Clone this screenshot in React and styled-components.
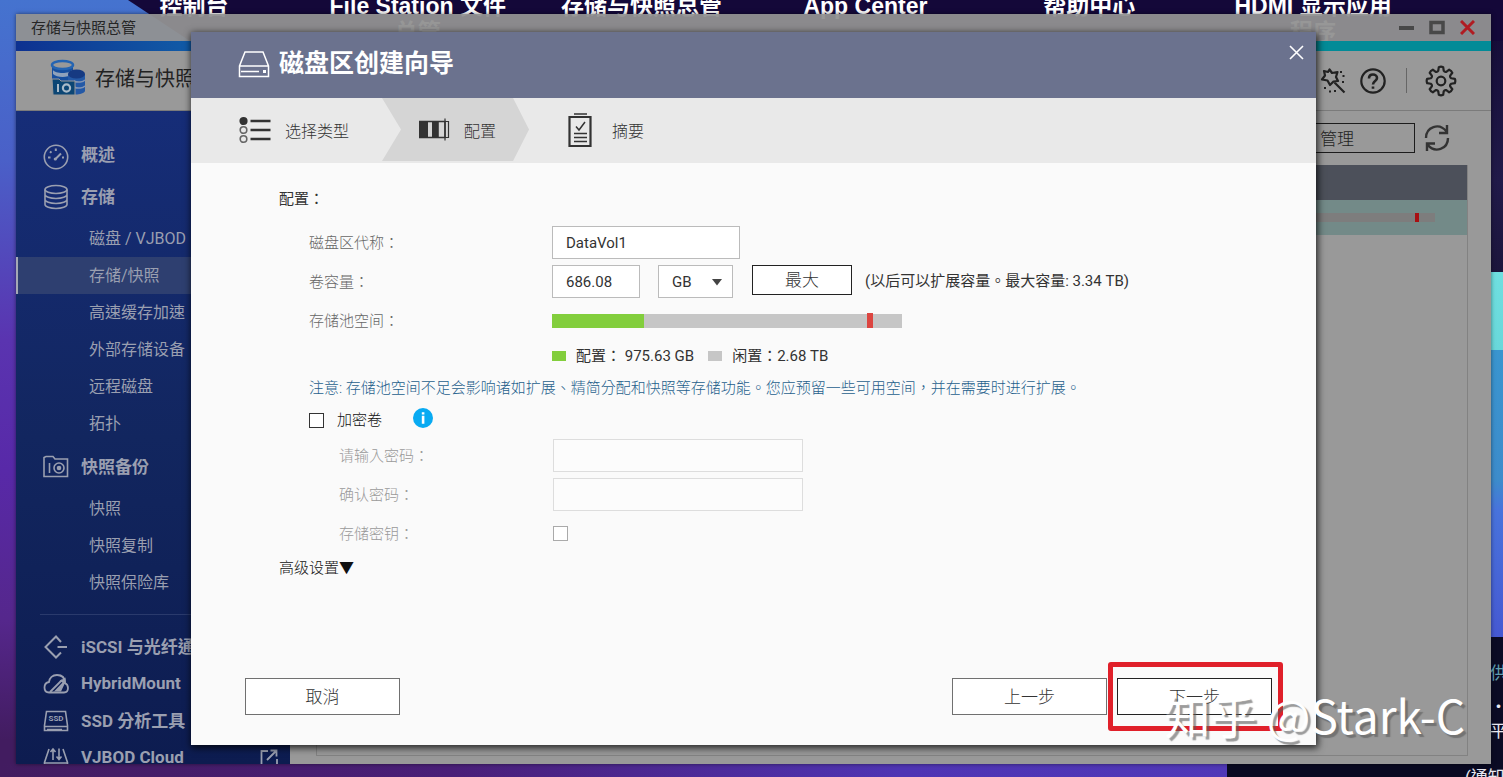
import React from "react";
import styled, { createGlobalStyle, css } from "styled-components";

const sans = `Roboto, "Noto Sans CJK TC", "Noto Sans CJK SC", sans-serif`;

const Global = createGlobalStyle`
  *, *::before, *::after { box-sizing: border-box; }
  body { margin: 0; font-family: ${sans}; font-size: 15px; color: #333; }
  button, input, select { font: inherit; color: inherit; margin: 0; border-radius: 0; }
  a { color: inherit; text-decoration: none; }
  ul { list-style: none; margin: 0; padding: 0; }
  h1, h2, p { margin: 0; }
`;

/* ---------- desktop ---------- */

const Desktop = styled.div`
  position: relative;
  height: 100vh;
  min-height: 700px;
  overflow: hidden;
  background:
    linear-gradient(180deg, #130a35 0, #211a49 180px, #1c153c 272px, #6fdfe0 272px, #69d8da 350px, #3a95cf 350px, #3d8ccb 480px, #4873dc 510px, #4659d2 637px, #0b0b24 637px) right top / 14px 100% no-repeat,
    linear-gradient(#0a0a22, #0a0a22) right bottom / 276px 14px no-repeat,
    linear-gradient(90deg, #421c60 0, #4a1f78 30%, #4f35b4 60%, #5038b8 82%) left bottom / 100% 13px no-repeat,
    linear-gradient(180deg, #4573cf 0, #4a60c8 160px, #5a34b0 340px, #5829a8 470px, #55278c 620px, #421c60 740px);
`;

const NightSky = styled.div`
  position: absolute;
  inset: 0 0 auto 0;
  height: 41px;
  background: #140839;
  clip-path: polygon(128px 0, 100% 0, 100% 41px, 190px 41px);
`;

const Shortcuts = styled.nav`
  position: relative;
  display: grid;
  grid-template-columns: repeat(6, 1fr);
  padding: 0 78px 0 82px;
  margin-top: -7px;
  font: 700 23px/26px "Liberation Sans", "Noto Sans CJK TC", sans-serif;
  color: #fff;
  text-align: center;
`;

const Ticker = styled.aside`
  position: absolute;
  right: 0;
  bottom: -12px;
  width: 38px;
  font-size: 17px;
  line-height: 24px;
  color: #fff;
  white-space: nowrap;
`;

const TickerLine = styled.p`
  padding-left: ${(p) => (p.$wide ? 0 : 25)}px;
  margin-top: ${(p) => p.$gap || 0}px;
  color: ${(p) => (p.$tone === "link" ? "#5f9fb0" : "#e8e8f0")};
`;

/* ---------- storage manager window ---------- */

const Window = styled.main`
  position: absolute;
  inset: 14px 12px 13px 16px;
  display: flex;
  flex-direction: column;
  box-shadow: 0 0 4px rgba(0, 0, 0, 0.5);
`;

const TitleBar = styled.header`
  display: flex;
  align-items: center;
  justify-content: space-between;
  height: 27px;
  padding: 0 16px 0 15px;
  background: rgba(145, 145, 145, 0.95);
  color: #262626;
`;

const TitleText = styled.span`
  padding-bottom: 2px;
`;

const WindowButtons = styled.div`
  display: flex;
  align-items: center;
  gap: 14px;
`;

const IconButton = styled.button`
  display: flex;
  align-items: center;
  justify-content: center;
  padding: 0;
  border: 0;
  background: none;
`;

const Stripe = styled.div`
  height: 10px;
  background: linear-gradient(90deg, #0d3190 0, #1263ab 14%, #0a7ba0 50%, #028b97 85%);
`;

const AppHeader = styled.div`
  display: flex;
  align-items: center;
  justify-content: space-between;
  height: 60px;
  padding: 0 34px 0 34px;
  background: #999;
  border-bottom: 1px solid #7b7b7b;
  color: #222;
`;

const Brand = styled.div`
  display: flex;
  align-items: center;
  gap: 9px;
  padding-bottom: 6px;
  font-size: 20px;
`;

const HeaderTools = styled.div`
  display: flex;
  align-items: center;
  gap: 14px;
`;

const ToolDivider = styled.span`
  width: 1px;
  height: 25px;
  margin: 0 4px 0 6px;
  background: #666;
`;

const Body = styled.div`
  display: flex;
  flex: 1;
  min-height: 0;
`;

const Sidebar = styled.nav`
  flex: none;
  width: 274px;
  padding-top: 23px;
  overflow: hidden;
  background: linear-gradient(180deg, #162d78 0, #12265f 50%, #0d1c50 100%);
  color: #9a9fb0;
`;

const SectionLink = styled.a`
  display: flex;
  align-items: center;
  gap: 12px;
  height: ${(p) => (p.$compact ? 37 : 42)}px;
  padding: 0 12px 0 27px;
  font-size: 17px;
  font-weight: 700;
  white-space: nowrap;
  & > span { padding-bottom: ${(p) => (p.$compact ? 2 : 4)}px; }
  & > svg:last-child { margin-left: auto; }
`;

const SubList = styled.ul`
  padding: 2px 0 4px;
`;

const SubLink = styled.a`
  display: flex;
  align-items: center;
  height: 37px;
  padding: 0 0 4px 71px;
  border-left: 2px solid transparent;
  font-size: 16px;
  ${(p) => p.$active && css`
    background: #2e3f70;
    border-left-color: #a5a9b5;
  `}
`;

const Rule = styled.hr`
  height: 1px;
  margin: 9px 0 13px 24px;
  border: 0;
  background: #2a3a6c;
`;

const Content = styled.section`
  flex: 1;
  display: flex;
  flex-direction: column;
  padding: 12px 23px 8px 26px;
  background: #999;
`;

const ContentTools = styled.div`
  display: flex;
  align-items: center;
  justify-content: flex-end;
  gap: 9px;
  height: 30px;
  margin: 0 18px 12px 0;
`;

const ManageButton = styled.button`
  width: 130px;
  height: 30px;
  padding: 0 0 2px 34px;
  border: 1px solid #1c1c1c;
  background: none;
  font-size: 17px;
  font-weight: 300;
  text-align: left;
  color: #222;
`;

const PoolTable = styled.div`
  flex: 1;
  border: 1px solid #828282;
  border-top: 0;
`;

const PoolHead = styled.div`
  height: 35px;
  background: #4c505a;
`;

const PoolRow = styled.div`
  display: flex;
  align-items: center;
  justify-content: flex-end;
  height: 35px;
  padding-right: 32px;
  background: #738a88;
`;

const PoolMeter = styled.div`
  display: flex;
  justify-content: flex-end;
  width: 200px;
  height: 9px;
  padding-right: 16px;
  background: #7d7d7d;
`;

const PoolMark = styled.span`
  width: 4px;
  background: #a80f12;
`;

/* ---------- wizard dialog ---------- */

const Dialog = styled.section`
  position: absolute;
  inset: 18px 175px 19px;
  display: flex;
  flex-direction: column;
  background: #fafafa;
  box-shadow: 1px 2px 7px 1px rgba(0, 0, 0, 0.75);
`;

const DialogHead = styled.header`
  display: flex;
  align-items: flex-start;
  justify-content: space-between;
  height: 66px;
  padding: 13px 12px 0 47px;
  background: #6b728e;
  color: #fff;
`;

const DialogTitle = styled.h1`
  display: flex;
  align-items: center;
  gap: 9px;
  font-size: 25px;
  line-height: 37px;
  font-weight: 700;
`;

const Steps = styled.ol`
  display: flex;
  height: 65px;
  margin: 0;
  padding: 0 0 2px;
  list-style: none;
  background: #e9e9e9;
`;

const Step = styled.li`
  display: flex;
  align-items: center;
  gap: 14px;
  padding-left: ${(p) => p.$indent}px;
  padding-right: 33px;
  font-size: 16px;
  font-weight: 300;
  ${(p) => p.$current && css`
    background: #d5d5d5;
    clip-path: polygon(0 0, calc(100% - 16px) 0, 100% 50%, calc(100% - 16px) 100%, 0 100%, 19px 50%);
  `}
`;

const Form = styled.form`
  display: flex;
  flex: 1;
  flex-direction: column;
`;

const Fields = styled.div`
  flex: 1;
  padding: 20px 88px 0;
`;

const FieldsTitle = styled.h2`
  margin-bottom: 8px;
  font-size: 15px;
  line-height: 32px;
  font-weight: 400;
`;

const Row = styled.div`
  display: flex;
  align-items: center;
  height: ${(p) => p.$height || 39}px;
  padding-left: ${(p) => (p.$nested ? 60 : 30)}px;
`;

const Label = styled.label`
  flex: none;
  width: ${(p) => (p.$nested ? 214 : 243)}px;
  padding-bottom: 3px;
  color: ${(p) => (p.$nested ? "#999" : "#666")};
  font-weight: 300;
`;

const Hint = styled.span`
  padding-bottom: 4px;
`;

const TextBox = styled.input`
  width: ${(p) => p.$width}px;
  height: 33px;
  padding: 0 13px;
  border: 1px solid ${(p) => (p.disabled ? "#ddd" : "#bbb")};
  background: ${(p) => (p.disabled ? "#fcfcfc" : "#fff")};
`;

const UnitPicker = styled.div`
  position: relative;
  margin: 0 19px 0 18px;
  & > svg { position: absolute; right: 10px; top: 13px; pointer-events: none; }
`;

const UnitSelect = styled.select`
  appearance: none;
  width: 75px;
  height: 33px;
  padding: 0 13px;
  border: 1px solid #bbb;
  background: #fff;
`;

const MaxButton = styled.button`
  width: 100px;
  height: 30px;
  margin: 0 13px 4px 0;
  padding: 0 0 2px;
  border: 1px solid #222;
  background: #fff;
  font-size: 17px;
  font-weight: 300;
`;

const Meter = styled.div`
  position: relative;
  width: 350px;
  height: 14px;
  background: #c6c6c6;
`;

const MeterFill = styled.div`
  height: 100%;
  background: #82ce3c;
`;

const MeterMark = styled.span`
  position: absolute;
  top: -1px;
  bottom: 0;
  width: 6px;
  background: #dc4540;
`;

const Legend = styled.div`
  display: flex;
  align-items: center;
  height: 32px;
  padding-left: 273px;
`;

const LegendText = styled.span`
  padding-bottom: 3px;
`;

const Swatch = styled.span`
  width: 14px;
  height: 10px;
  margin: 0 10px 0 ${(p) => (p.$later ? 14 : 0)}px;
  background: ${(p) => p.$color};
`;

const Note = styled.p`
  padding-left: 30px;
  line-height: 32px;
  color: #1f5f8c;
  font-weight: 300;
`;

const Tick = styled.input`
  appearance: none;
  width: 15px;
  height: 15px;
  border: 1px solid ${(p) => (p.disabled ? "#aaa" : "#333")};
  background: #fff;
`;

const TickLabel = styled.label`
  display: flex;
  align-items: center;
  gap: 13px;
  margin-right: 31px;
  font-weight: 300;
  color: #111;
  & > span { padding-bottom: 3px; }
`;

const InfoButton = styled(IconButton)`
  margin-bottom: 4px;
`;

const Advanced = styled.button`
  display: block;
  padding: 0;
  border: 0;
  background: none;
  line-height: 30px;
  font-weight: 300;
  color: #111;
`;

const Footer = styled.footer`
  display: flex;
  gap: 10px;
  padding: 0 44px 30px 54px;
`;

const FooterButton = styled.button`
  width: 155px;
  height: 37px;
  margin-right: ${(p) => (p.$first ? "auto" : 0)};
  padding: 0 0 3px;
  border: 1px solid ${(p) => (p.$main ? "#222" : "#707070")};
  background: #fff;
  font-size: 17px;
  font-weight: 300;
`;

const Highlight = styled.div`
  position: relative;
  &::after {
    content: "";
    position: absolute;
    inset: -16px -11px -16px -9px;
    border: 5px solid #e0202a;
    border-radius: 3px;
    pointer-events: none;
  }
`;

const Signature = styled.p`
  position: absolute;
  right: 38px;
  bottom: 33px;
  font: 400 46px/60px "Noto Sans CJK SC", sans-serif;
  color: #fff;
  text-shadow: 3px 3px 1px rgba(90, 90, 90, 0.6);
  white-space: nowrap;
`;

/* ---------- drawings ---------- */

const Drawing = styled.svg`
  flex: none;
`;

const Line = ({ w = 26, h = 26, box, sw = 1.6, children }) => (
  <Drawing width={w} height={h} viewBox={box || `0 0 ${w} ${h}`} fill="none" stroke="currentColor" strokeWidth={sw} aria-hidden="true">
    {children}
  </Drawing>
);

const Gauge = () => (
  <Line w={26} h={32} box="0 -5 26 32">
    <circle cx="13" cy="13" r="11.7" />
    <path d="M12 15.500L18 9.500M5 13.500h2.500M7 7.500l1.500 1.300M12.800 4.500v2.500M19 13.500h2" strokeWidth="2" />
    <circle cx="12.300" cy="15" r="1.600" fill="currentColor" stroke="none" />
  </Line>
);
const Disks = () => (
  <Line>
    <ellipse cx="13" cy="5.500" rx="11" ry="4" />
    <path d="M2 5.500v15c0 2.200 5 4 11 4s11-1.800 11-4v-15M2 10.500c0 2.200 5 4 11 4s11-1.800 11-4M2 15.500c0 2.200 5 4 11 4s11-1.800 11-4" />
  </Line>
);
const Snapshot = () => (
  <Line>
    <path d="M1 22.500v-19l2-1h7l2 2.500h12.500v17.500zM6.500 9v10" />
    <circle cx="16" cy="14" r="5" /><circle cx="16" cy="14" r="1.500" fill="currentColor" />
  </Line>
);
const Iscsi = () => (
  <Line sw={2}>
    <path d="M18 8l-5-5.500L2.500 13 13 23.500l5-5M14.500 13H24" />
  </Line>
);
const Cloud = () => (
  <Line sw={1.8}>
    <path d="M6 21.500h15c3 0 4-2.500 4-4.500 0-2.500-1-4-3-5C22 6 18 4 14 4 9.500 4 6.500 7 6 11c-3 .5-4.500 2.500-4.500 5.500S3 21.500 6 21.500z" />
    <path d="M11 20.500l8.500-9-3-1.500 6-3.500.5 7-1.500-.5-3.500 7.500z" fill="currentColor" stroke="none" /><path d="M7 21L19 9" />
  </Line>
);
const Ssd = () => (
  <Line>
    <path d="M3.500 3.500h19l2 14v5h-23v-5zM1.500 18.500h23M4 21.500h15" />
    <text x="13" y="13" textAnchor="middle" fontSize="8" fontWeight="700" fill="currentColor" stroke="none">SSD</text>
  </Line>
);
const Vjbod = () => (
  <Line>
    <path d="M6 4L1.500 17.500V23M20 4l4.500 13.500V23M1.500 18h23M10 15V4.500M7.500 7L10 4l2.500 3M16 3.500V14M13.500 11.500l2.500 3 2.500-3M5 21v2M9 21v2" />
  </Line>
);
const External = () => (
  <Line w={18} h={18} sw={1.8}>
    <path d="M8 2H1.500v14.500H17V10M7 11L16 2M10.500 1.500H16.500V7.500" />
  </Line>
);
const BrandIcon = () => (
  <svg width="36" height="38" viewBox="0 0 36 38" aria-hidden="true">
    <path d="M2 6v14c0 3 21 3 21 0V6z" fill="#174f9e" />
    <ellipse cx="12.500" cy="6" rx="10.500" ry="4" fill="#999" stroke="#2464b2" strokeWidth="2.500" />
    <path d="M3 11c2 4 17 4 19 0v4c-4 4-15 4-19 0z" fill="#8fa2bb" />
    <path d="M18 15v18c2 4 16 3 17-1V15z" fill="#2459a6" />
    <ellipse cx="26.500" cy="15" rx="8.500" ry="4.500" fill="#163a82" />
    <path d="M24 22c4 2 9 1 11-1M24 28c4 2 9 1 11-1" stroke="#8295b5" strokeWidth="1.500" fill="none" />
    <path d="M2 20h7l2 2h14v14H3z" fill="#0c4674" stroke="#999" strokeWidth="1" />
    <path d="M8 25v8" stroke="#a9bac8" strokeWidth="2" /><circle cx="16.500" cy="29" r="3.600" fill="none" stroke="#a9bac8" strokeWidth="2.200" />
  </svg>
);
const Wand = () => (
  <Line sw={2.2}>
    <path d="M9.500 1.500l2.500 3.500 5.500-1-1.500 5 2 4-4.500.5L10 17l-2.500-4.500-5.500-1 3-4L4 3l4 1zM14.500 14.500l10 10" strokeLinejoin="round" />
    <path d="M20 4h2M22.500 8h2M22 14h2M4 20h2M9 23.500h2M14 23h2" />
  </Line>
);
const Help = () => (
  <Line sw={2.2}>
    <circle cx="13" cy="13" r="11.700" />
    <path d="M9 10.500c0-5.500 8-5 8-.5 0 3-4 3-4 6.500M13 18.500v2.200" strokeWidth="2.600" />
  </Line>
);
const gearPath = Array.from({ length: 8 }, (_, i) => {
  const at = (r, d) => {
    const a = ((i * 45 + d - 90) * Math.PI) / 180;
    return `${(16 + r * Math.cos(a)).toFixed(2)} ${(16 + r * Math.sin(a)).toFixed(2)}`;
  };
  return `${i ? "L" : "M"}${at(10.6, -15)}L${at(14, -9)}Q${at(14.8, 0)} ${at(14, 9)}L${at(10.6, 15)}Q${at(9.4, 22.5)} ${at(10.6, 30)}`;
}).join("") + "Z";
const Gear = () => (
  <Line w={32} h={32} sw={2.2}>
    <path d={gearPath} strokeLinejoin="round" /><circle cx="16" cy="16" r="4.300" />
  </Line>
);
const Refresh = () => (
  <Line w={26} h={30} sw={2.4}>
    <path d="M2 15C2 4 15-1 22.500 8.500M23 2v8h-8M24 15c0 11-13 16-20.500 6.500M3 28v-7.500h8" />
  </Line>
);
const Drive = () => (
  <Line w={32} h={28} sw={1.5}>
    <path d="M7 2h18l5.500 14v10.500h-29V16zM1.500 16h29M3 21.500h18" /><path d="M25 20h3v3h-3z" fill="currentColor" stroke="none" />
  </Line>
);
const Choices = () => (
  <Line w={32} h={28}>
    <path d="M11.500 5h20M11.500 14h20M11.500 23h20" strokeWidth="2.600" />
    <circle cx="4.500" cy="5" r="3.300" fill="currentColor" /><circle cx="4.500" cy="14" r="3.300" stroke="#666" /><circle cx="4.500" cy="23" r="3.300" stroke="#666" />
  </Line>
);
const Partition = () => (
  <Line w={32} h={28}>
    <path d="M1 5h9v17H1zM14 5h6v17h-6z" fill="currentColor" stroke="none" />
    <path d="M1 5.500h26v16H1M20 5v17" />
    <path d="M27 2.500v22M27 5.500h3.500v16H27" strokeWidth="1.200" />
  </Line>
);
const Clipboard = () => (
  <Line w={32} h={36} sw={2.2}>
    <path d="M3.500 5h21v29h-21z" /><path d="M8 2h13M8 21.500h13M8 25.500h13M8 29.500h13M10 14.500l3 3.500 6-8" strokeWidth="1.500" />
  </Line>
);
const Cross = ({ color, sw = 1.6 }) => (
  <svg width="15" height="15" viewBox="0 0 15 15" stroke={color} strokeWidth={sw} aria-hidden="true"><path d="M1 1l13 13M14 1L1 14" /></svg>
);
const Info = () => (
  <svg width="20" height="20" viewBox="0 0 20 20" aria-hidden="true"><circle cx="10" cy="10" r="10" fill="#08aaf2" /><path d="M8.800 4.200h2.600v2.200H8.800zM8.800 7.800h2.600v8H8.800z" fill="#fff" /></svg>
);

/* ---------- data ---------- */

const shortcuts = [["控制台"], ["File Station 文件", "总管"], ["存储与快照总管"], ["App Center"], ["帮助中心"], ["HDMI 显示应用", "程序"]];
const storageLinks = ["磁盘 / VJBOD", "存储/快照", "高速缓存加速", "外部存储设备", "远程磁盘", "拓扑"];
const snapshotLinks = ["快照", "快照复制", "快照保险库"];
const tools = [
  { icon: <Iscsi />, name: "iSCSI 与光纤通道" },
  { icon: <Cloud />, name: "HybridMount" },
  { icon: <Ssd />, name: "SSD 分析工具" },
  { icon: <Vjbod />, name: "VJBOD Cloud", external: true },
];

const SubLinks = ({ names, active }) => (
  <SubList>
    {names.map((name) => (
      <li key={name}><SubLink href="#" $active={name === active}>{name}</SubLink></li>
    ))}
  </SubList>
);

export default function App() {
  return (
    <>
      <Global />
      <Desktop>
        <NightSky />
        <Shortcuts>
          {shortcuts.map((lines) => (
            <a href="#" key={lines[0]}>
              {lines.map((line) => <div key={line}>{line}</div>)}
            </a>
          ))}
        </Shortcuts>
        <Ticker>
          <TickerLine $tone="link">供</TickerLine>
          <TickerLine $gap={10}>・</TickerLine>
          <TickerLine>平</TickerLine>
          <TickerLine $wide $gap={22}>(通知</TickerLine>
        </Ticker>

        <Window>
          <TitleBar>
            <TitleText>存储与快照总管</TitleText>
            <WindowButtons>
              <IconButton aria-label="最小化"><svg width="16" height="16"><path d="M0 6h15v4H0z" fill="#484848" /></svg></IconButton>
              <IconButton aria-label="最大化"><svg width="17" height="16"><path d="M2 2.500h12v10H2z" fill="none" stroke="#484848" strokeWidth="3.500" /></svg></IconButton>
              <IconButton aria-label="关闭"><Cross color="#b01c22" sw={3} /></IconButton>
            </WindowButtons>
          </TitleBar>
          <Stripe />
          <AppHeader>
            <Brand><BrandIcon />存储与快照总管</Brand>
            <HeaderTools>
              <IconButton aria-label="向导"><Wand /></IconButton>
              <IconButton aria-label="帮助"><Help /></IconButton>
              <ToolDivider />
              <IconButton aria-label="设置"><Gear /></IconButton>
            </HeaderTools>
          </AppHeader>
          <Body>
            <Sidebar>
              <SectionLink href="#"><Gauge /><span>概述</span></SectionLink>
              <SectionLink href="#"><Disks /><span>存储</span></SectionLink>
              <SubLinks names={storageLinks} active="存储/快照" />
              <SectionLink href="#"><Snapshot /><span>快照备份</span></SectionLink>
              <SubLinks names={snapshotLinks} />
              <Rule />
              {tools.map((tool) => (
                <SectionLink href="#" key={tool.name} $compact>
                  {tool.icon}<span>{tool.name}</span>{tool.external && <External />}
                </SectionLink>
              ))}
            </Sidebar>
            <Content>
              <ContentTools>
                <ManageButton>管理</ManageButton>
                <IconButton aria-label="刷新"><Refresh /></IconButton>
              </ContentTools>
              <PoolTable>
                <PoolHead />
                <PoolRow><PoolMeter><PoolMark /></PoolMeter></PoolRow>
              </PoolTable>
            </Content>
          </Body>

          <Dialog role="dialog" aria-labelledby="wizard-title">
            <DialogHead>
              <DialogTitle id="wizard-title"><Drive />磁盘区创建向导</DialogTitle>
              <IconButton aria-label="关闭向导"><Cross color="#fff" /></IconButton>
            </DialogHead>
            <Steps>
              <Step $indent={48}><Choices />选择类型</Step>
              <Step $indent={36} $current aria-current="step"><Partition />配置</Step>
              <Step $indent={37}><Clipboard />摘要</Step>
            </Steps>
            <Form onSubmit={(e) => e.preventDefault()}>
              <Fields>
                <FieldsTitle>配置：</FieldsTitle>
                <Row>
                  <Label htmlFor="alias">磁盘区代称：</Label>
                  <TextBox id="alias" $width={188} defaultValue="DataVol1" />
                </Row>
                <Row>
                  <Label htmlFor="capacity">卷容量：</Label>
                  <TextBox id="capacity" $width={88} defaultValue="686.08" />
                  <UnitPicker>
                    <UnitSelect aria-label="单位" defaultValue="GB"><option>GB</option><option>TB</option></UnitSelect>
                    <svg width="12" height="8"><path d="M1 1h10L6 7.500z" fill="#444" /></svg>
                  </UnitPicker>
                  <MaxButton type="button">最大</MaxButton>
                  <Hint>(以后可以扩展容量。最大容量: 3.34 TB)</Hint>
                </Row>
                <Row>
                  <Label as="span">存储池空间：</Label>
                  <Meter>
                    <MeterFill style={{ width: "26.3%" }} />
                    <MeterMark style={{ left: "90%" }} />
                  </Meter>
                </Row>
                <Legend>
                  <Swatch $color="#82ce3c" /><LegendText>配置： 975.63 GB</LegendText>
                  <Swatch $color="#c6c6c6" $later /><LegendText>闲置：2.68 TB</LegendText>
                </Legend>
                <Note>注意: 存储池空间不足会影响诸如扩展、精简分配和快照等存储功能。您应预留一些可用空间，并在需要时进行扩展。</Note>
                <Row $height={32}>
                  <TickLabel><Tick type="checkbox" /><span>加密卷</span></TickLabel>
                  <InfoButton type="button" aria-label="说明"><Info /></InfoButton>
                </Row>
                <Row $nested>
                  <Label $nested htmlFor="password">请输入密码：</Label>
                  <TextBox id="password" type="password" $width={250} disabled />
                </Row>
                <Row $nested>
                  <Label $nested htmlFor="confirm">确认密码：</Label>
                  <TextBox id="confirm" type="password" $width={250} disabled />
                </Row>
                <Row $nested>
                  <Label $nested htmlFor="savekey">存储密钥：</Label>
                  <Tick id="savekey" type="checkbox" disabled />
                </Row>
                <Advanced type="button">高级设置▼</Advanced>
              </Fields>
              <Footer>
                <FooterButton type="button" $first>取消</FooterButton>
                <FooterButton type="button">上一步</FooterButton>
                <Highlight><FooterButton $main>下一步</FooterButton></Highlight>
              </Footer>
            </Form>
          </Dialog>
        </Window>
        <Signature>知乎 @Stark-C</Signature>
      </Desktop>
    </>
  );
}
